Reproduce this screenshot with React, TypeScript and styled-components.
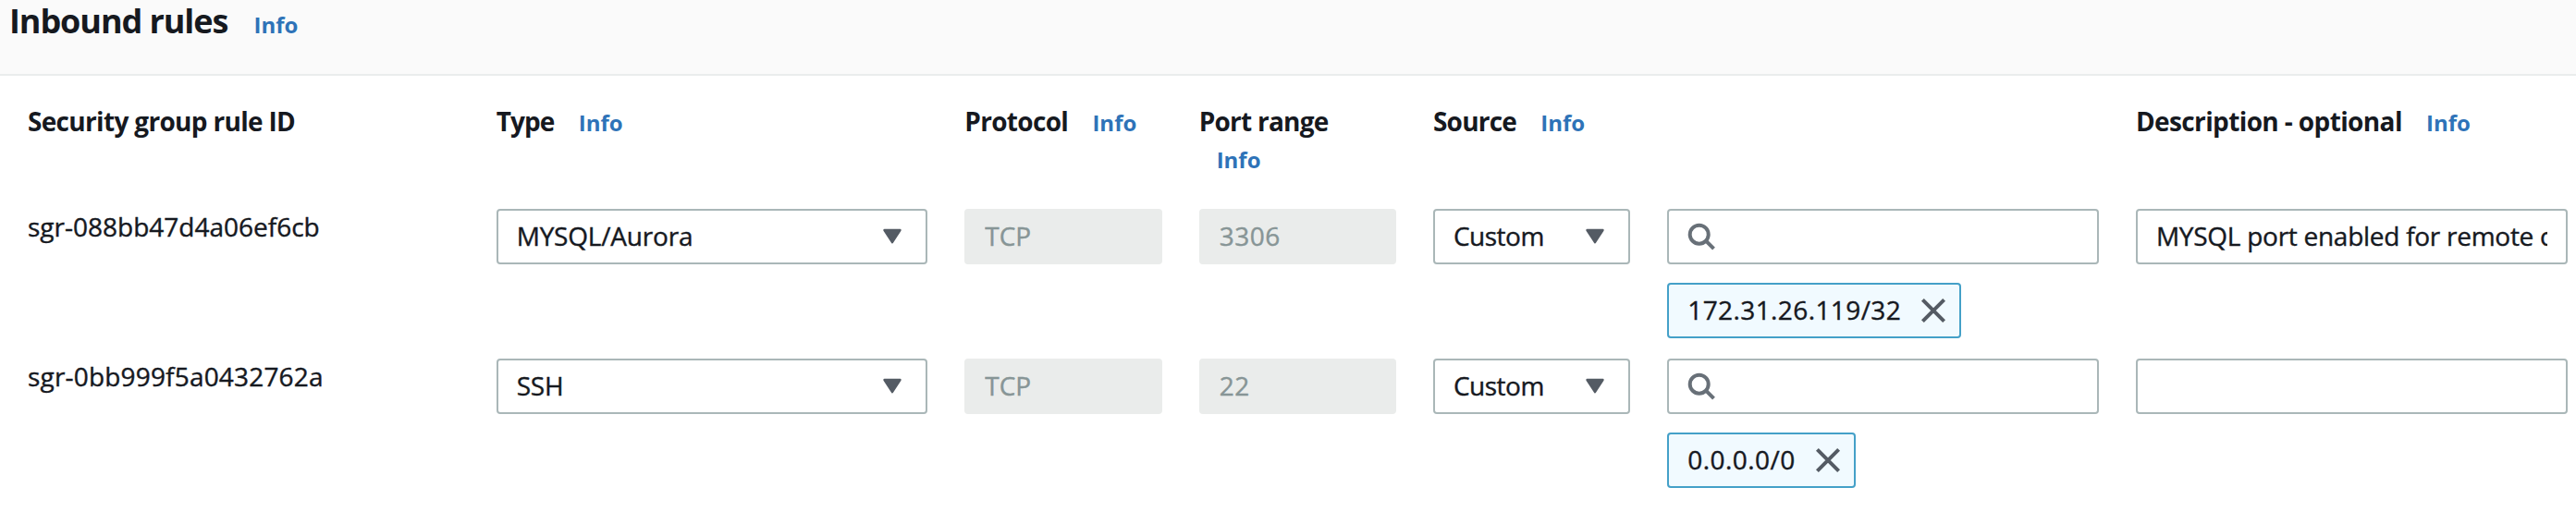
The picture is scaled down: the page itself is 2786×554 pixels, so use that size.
import React from "react";
import styled, { createGlobalStyle } from "styled-components";

const GlobalStyle = createGlobalStyle`
  * { box-sizing: border-box; }
  body {
    margin: 0;
    background: #ffffff;
    color: #16191f;
    font-family: "Open Sans", "Noto Sans", sans-serif;
    font-size: 28px;
  }
`;

const Panel = styled.section`
  width: 2786px;
  height: 554px;
  overflow: hidden;
`;

const PanelHeader = styled.header`
  height: 82px;
  padding-left: 10px;
  background: #fafafa;
  border-bottom: 2px solid #eaeded;
`;

const Title = styled.h2`
  margin: 0;
  font-size: 36px;
  line-height: 45px;
  font-weight: 700;
`;

const Tracked = styled.span<{ $tracking: number }>`
  letter-spacing: ${(p) => p.$tracking}px;
  white-space: pre;
`;

const InfoLink = styled.a`
  display: inline-block;
  margin-left: 19px;
  color: #2e73b8;
  font-size: 24px;
  line-height: 1;
  font-weight: 700;
  text-decoration: none;
`;

const RulesGrid = styled.div`
  display: grid;
  grid-template-columns: repeat(11, 213.33px);
  column-gap: 40px;
  row-gap: 22px;
  padding: 29px 0 0 30px;
`;

const Cell = styled.div<{ $span?: number }>`
  grid-column: span ${(p) => p.$span ?? 1};
  min-width: 0;
`;

const ColumnHeading = styled(Cell)`
  height: 93px;
  line-height: 40px;
  font-weight: 700;
`;

const RuleId = styled(Cell)`
  height: 140px;
  line-height: 38px;
  -webkit-text-stroke: 0.4px currentColor;
`;

const Field = styled.div<{ $disabled?: boolean }>`
  display: flex;
  align-items: center;
  justify-content: space-between;
  height: 60px;
  padding: 0 25px 0 20px;
  border: 2px solid ${(p) => (p.$disabled ? "#eaeceb" : "#aab7b8")};
  border-radius: 4px;
  background: ${(p) => (p.$disabled ? "#eaeceb" : "#ffffff")};
  color: ${(p) => (p.$disabled ? "#879596" : "#16191f")};
`;

const FieldText = styled.span`
  flex: 0 1 auto;
  min-width: 0;
  height: 56px;
  line-height: 54px;
  overflow: hidden;
  white-space: nowrap;
  -webkit-text-stroke: 0.4px currentColor;
`;

const DescriptionField = styled(Field)`
  padding-right: 20px;
`;

const SearchField = styled(Field)`
  justify-content: flex-start;
`;

const Token = styled.div`
  display: inline-flex;
  align-items: center;
  gap: 21px;
  height: 60px;
  margin-top: 20px;
  padding: 0 14px 0 20px;
  border: 2px solid #44a0c8;
  border-radius: 4px;
  background: #f1faff;
`;

const Caret = () => (
  <svg width="22" height="18" viewBox="0 0 22 18">
    <path d="M2.5 2h17L11 15.2Z" fill="#545b64" stroke="#545b64" strokeWidth="2.4" strokeLinejoin="round" />
  </svg>
);

const SearchIcon = () => (
  <svg width="32" height="32" viewBox="0 0 32 32" fill="none" stroke="#687078" strokeWidth="4">
    <circle cx="12.7" cy="13.7" r="10" />
    <path d="M20 20.7 28.5 29.2" />
  </svg>
);

const CloseIcon = () => (
  <svg width="28" height="28" viewBox="0 0 28 28" fill="none" stroke="#545b64" strokeWidth="4">
    <path d="M2.4 2.4 25.6 25.6M25.6 2.4 2.4 25.6" />
  </svg>
);

const headings = [
  { text: "Security group rule ID", tracking: -0.68, span: 2, info: false },
  { text: "Type", tracking: -0.9, span: 2, info: true },
  { text: "Protocol", tracking: -0.7, span: 1, info: true },
  { text: "Port range", tracking: -0.75, span: 1, info: true },
  { text: "Source", tracking: -0.8, span: 3, info: true },
  { text: "Description - optional", tracking: -0.62, span: 2, info: true },
];

const rules = [
  {
    id: "sgr-088bb47d4a06ef6cb",
    idTracking: 0,
    type: "MYSQL/Aurora",
    port: "3306",
    cidr: "172.31.26.119/32",
    cidrTracking: 0.4,
    description: "MYSQL port enabled for remote connection",
  },
  {
    id: "sgr-0bb999f5a0432762a",
    idTracking: 0.18,
    type: "SSH",
    port: "22",
    cidr: "0.0.0.0/0",
    cidrTracking: 0.45,
    description: "",
  },
];

export default function App() {
  return (
    <Panel>
      <GlobalStyle />
      <PanelHeader>
        <Title>
          <Tracked $tracking={-1.08}>Inbound rules</Tracked> <InfoLink>Info</InfoLink>
        </Title>
      </PanelHeader>
      <RulesGrid>
        {headings.map((h) => (
          <ColumnHeading key={h.text} $span={h.span}>
            <Tracked $tracking={h.tracking}>{h.text}</Tracked>
            {h.info && <> <InfoLink>Info</InfoLink></>}
          </ColumnHeading>
        ))}
        {rules.map((r) => (
          <React.Fragment key={r.id}>
            <RuleId $span={2}>
              <Tracked $tracking={r.idTracking}>{r.id}</Tracked>
            </RuleId>
            <Cell $span={2}>
              <Field>
                <FieldText>
                  <Tracked $tracking={-0.2}>{r.type}</Tracked>
                </FieldText>
                <Caret />
              </Field>
            </Cell>
            <Cell>
              <Field $disabled>
                <FieldText>TCP</FieldText>
              </Field>
            </Cell>
            <Cell>
              <Field $disabled>
                <FieldText>
                  <Tracked $tracking={0.5}>{r.port}</Tracked>
                </FieldText>
              </Field>
            </Cell>
            <Cell>
              <Field>
                <FieldText>
                  <Tracked $tracking={-0.5}>Custom</Tracked>
                </FieldText>
                <Caret />
              </Field>
            </Cell>
            <Cell $span={2}>
              <SearchField>
                <SearchIcon />
              </SearchField>
              <Token>
                <FieldText>
                  <Tracked $tracking={r.cidrTracking}>{r.cidr}</Tracked>
                </FieldText>
                <CloseIcon />
              </Token>
            </Cell>
            <Cell $span={2}>
              <DescriptionField>
                <FieldText>
                  <Tracked $tracking={-0.27}>{r.description}</Tracked>
                </FieldText>
              </DescriptionField>
            </Cell>
          </React.Fragment>
        ))}
      </RulesGrid>
    </Panel>
  );
}
